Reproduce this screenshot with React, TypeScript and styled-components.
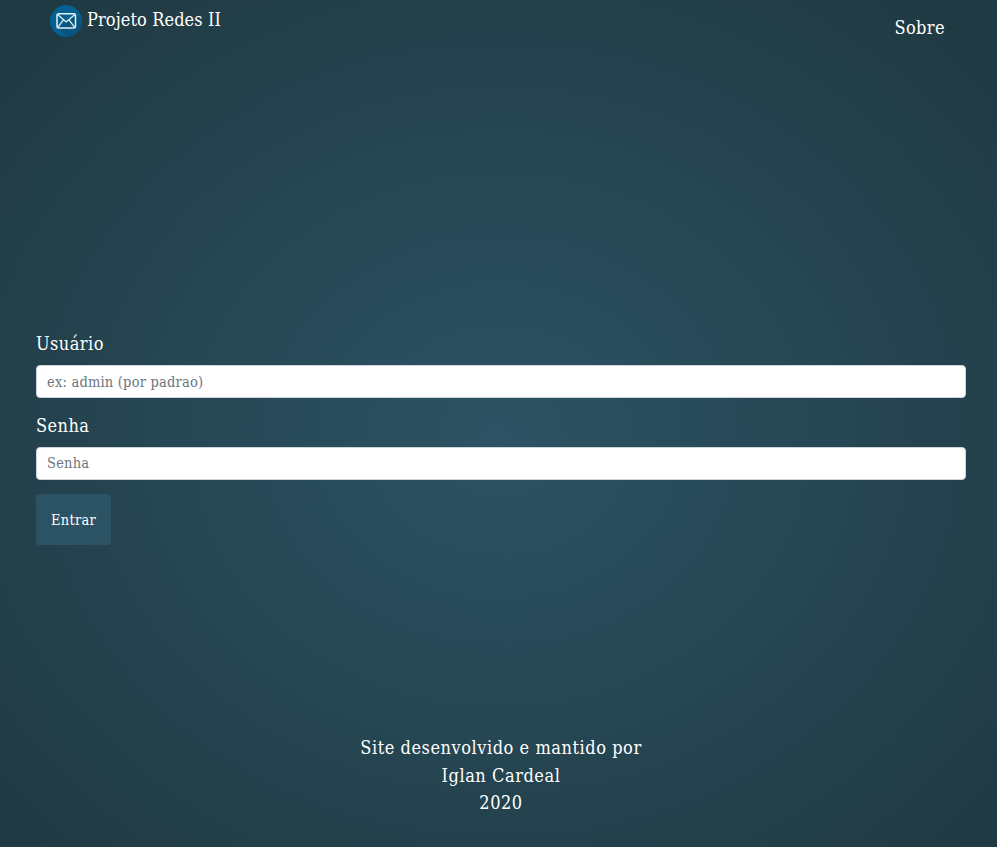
import React from 'react';
import styled, { createGlobalStyle } from 'styled-components';

const GlobalStyle = createGlobalStyle`
  html, body {
    margin: 0;
    padding: 0;
    height: 100%;
  }
  body {
    font-family: "DejaVu Serif", "Liberation Serif", serif;
    font-stretch: condensed;
    color: #fff;
  }
  * {
    box-sizing: border-box;
  }
`;

const Page = styled.div`
  width: 997px;
  height: 847px;
  display: flex;
  flex-direction: column;
  overflow: hidden;
  background: radial-gradient(ellipse 660px 570px at 500px 440px, #2c5364 0%, #203a43 100%);
`;

const Nav = styled.nav`
  height: 56px;
  padding: 5px 52px 0 50px;
  display: flex;
  justify-content: space-between;
  align-items: flex-start;
`;

const Brand = styled.a`
  display: flex;
  align-items: flex-start;
  gap: 5px;
  font-size: 18px;
  line-height: 30px;
  letter-spacing: 0.1px;
  color: #fff;
`;

const NavLink = styled.a`
  margin-top: 9px;
  font-size: 18px;
  line-height: 28px;
  letter-spacing: 0.4px;
  color: #fff;
`;

const Form = styled.form`
  margin-top: 274px;
  padding: 0 31px 0 36px;
  display: flex;
  flex-direction: column;
`;

const Group = styled.div`
  margin-bottom: 14px;
`;

const Label = styled.label`
  display: block;
  margin-bottom: 8px;
  font-size: 18px;
  line-height: 27px;
  letter-spacing: 0.45px;
`;

const Input = styled.input`
  display: block;
  width: 100%;
  height: 33px;
  padding: 0 10px;
  border: 1px solid #ced4da;
  border-radius: 4px;
  background: #fff;
  font-family: inherit;
  font-stretch: condensed;
  font-size: 14.5px;
  letter-spacing: 0.2px;
  color: #495057;
  outline: none;

  &::placeholder {
    color: #6c757d;
    opacity: 1;
  }

  &[type='password'] {
    padding-bottom: 2px;
  }
`;

const SubmitButton = styled.button`
  width: 75px;
  height: 51px;
  padding: 0;
  border: none;
  border-radius: 3px;
  background: #2c5364;
  font-family: inherit;
  font-stretch: condensed;
  font-size: 14.5px;
  letter-spacing: 0.23px;
  color: #fff;
`;

const Footer = styled.footer`
  margin-top: 189px;
  padding-left: 5px;
  text-align: center;
  font-size: 18px;
  line-height: 27.5px;
  letter-spacing: 0.55px;
`;

const MailIcon = () => (
  <svg width="32" height="32" viewBox="0 0 32 32" fill="none">
    <circle cx="16" cy="16" r="16" fill="#05608f" />
    <path d="M8 23.5 L16.5 32 A16 16 0 0 0 32 17 L25.5 9 Z" fill="#0a5580" />
    <rect x="7" y="8.7" width="18.5" height="14.4" rx="1.6" stroke="#e4f0f7" strokeWidth="1.5" />
    <path d="M7.6 9.6 L16.2 17 L24.9 9.6 M7.8 22.4 L13.4 14.9 M24.7 22.4 L19 14.9" stroke="#e4f0f7" strokeWidth="1.3" />
  </svg>
);

export default function App() {
  return (
    <Page>
      <GlobalStyle />
      <Nav>
        <Brand>
          <MailIcon />
          Projeto Redes II
        </Brand>
        <NavLink>Sobre</NavLink>
      </Nav>
      <Form>
        <Group>
          <Label htmlFor="user">Usuário</Label>
          <Input id="user" type="text" placeholder="ex: admin (por padrao)" />
        </Group>
        <Group>
          <Label htmlFor="password">Senha</Label>
          <Input id="password" type="password" placeholder="Senha" />
        </Group>
        <div>
          <SubmitButton type="submit">Entrar</SubmitButton>
        </div>
      </Form>
      <Footer>
        Site desenvolvido e mantido por
        <br />
        Iglan Cardeal
        <br />
        2020
      </Footer>
    </Page>
  );
}
